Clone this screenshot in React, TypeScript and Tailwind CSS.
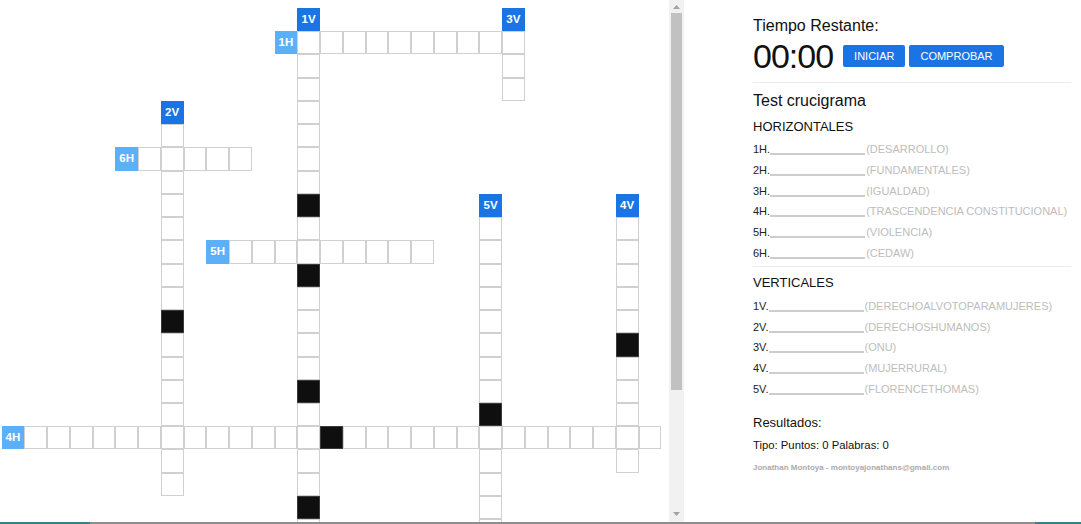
import React from 'react';

type Dir = 'H' | 'V';
type Kind = 'labelH' | 'labelV' | 'white' | 'black';

const palabras: { label: string; r: number; c: number; dir: Dir; word: string }[] = [
  { label: '1V', r: 0, c: 13, dir: 'V', word: 'DERECHO AL VOTO PARA MUJERES' },
  { label: '3V', r: 0, c: 22, dir: 'V', word: 'ONU' },
  { label: '1H', r: 1, c: 12, dir: 'H', word: 'DESARROLLO' },
  { label: '2V', r: 4, c: 7, dir: 'V', word: 'DERECHOS HUMANOS' },
  { label: '6H', r: 6, c: 5, dir: 'H', word: 'CEDAW' },
  { label: '5V', r: 8, c: 21, dir: 'V', word: 'FLORENCE THOMAS' },
  { label: '4V', r: 8, c: 27, dir: 'V', word: 'MUJER RURAL' },
  { label: '5H', r: 10, c: 9, dir: 'H', word: 'VIOLENCIA' },
  { label: '4H', r: 18, c: 0, dir: 'H', word: 'TRASCENDENCIA CONSTITUCIONAL' },
];

const horizontales = [
  ['1H.', '(DESARROLLO)'],
  ['2H.', '(FUNDAMENTALES)'],
  ['3H.', '(IGUALDAD)'],
  ['4H.', '(TRASCENDENCIA CONSTITUCIONAL)'],
  ['5H.', '(VIOLENCIA)'],
  ['6H.', '(CEDAW)'],
];

const verticales = [
  ['1V.', '(DERECHOALVOTOPARAMUJERES)'],
  ['2V.', '(DERECHOSHUMANOS)'],
  ['3V.', '(ONU)'],
  ['4V.', '(MUJERRURAL)'],
  ['5V.', '(FLORENCETHOMAS)'],
];

function armarCeldas() {
  const celdas = new Map<string, { r: number; c: number; kind: Kind; label?: string }>();
  palabras.forEach((p) => {
    celdas.set(`${p.r},${p.c}`, { r: p.r, c: p.c, kind: p.dir === 'H' ? 'labelH' : 'labelV', label: p.label });
  });
  palabras.forEach((p) => {
    p.word.split('').forEach((ch, i) => {
      const r = p.dir === 'V' ? p.r + 1 + i : p.r;
      const c = p.dir === 'H' ? p.c + 1 + i : p.c;
      const key = `${r},${c}`;
      const prev = celdas.get(key);
      if (prev && (prev.kind === 'labelH' || prev.kind === 'labelV')) return;
      celdas.set(key, { r, c, kind: ch === ' ' ? 'black' : 'white' });
    });
  });
  return Array.from(celdas.values());
}

function Celda({ r, c, kind, label }: { r: number; c: number; kind: Kind; label?: string }) {
  const pos = { gridRow: r + 1, gridColumn: c + 1 };
  if (kind === 'labelV' || kind === 'labelH') {
    return (
      <div
        style={pos}
        className={`${kind === 'labelV' ? 'bg-[#1b74e4]' : 'bg-[#5cb0f8]'} text-white text-[11.5px] font-bold flex items-center justify-center`}
      >
        {label}
      </div>
    );
  }
  if (kind === 'black') {
    return <div style={pos} className="bg-[#0f0f0f] border border-[#3a3a3a]" />;
  }
  return <div style={pos} className="bg-white border border-[#d0d0d0]" />;
}

function Flecha({ up }: { up?: boolean }) {
  return (
    <svg width="7" height="4" viewBox="0 0 7 4" className={up ? '' : 'rotate-180'}>
      <polygon points="0,4 3.5,0 7,4" fill="#a3a3a3" />
    </svg>
  );
}

function Pista({ num, resp }: { num: string; resp: string }) {
  return (
    <div className="text-[11px] leading-[20.8px] h-[20.8px] whitespace-nowrap">
      <span className="text-[#222]">{num}</span>
      <span className="inline-block w-[95px] border-b border-[#9c9c9c] translate-y-[1.5px]" />
      <span className="text-[#bdbdbd] ml-[1px]">{resp}</span>
    </div>
  );
}

export default function App() {
  const celdas = armarCeldas();

  return (
    <div className="w-[1081px] h-[524px] overflow-hidden bg-white font-['Liberation_Sans',Arial,sans-serif] text-[#111]">
      <div className="flex h-[522px]">
        {/* crucigrama */}
        <div className="w-[669px] h-full overflow-hidden">
          <div className="grid grid-cols-[repeat(29,22.75px)] grid-rows-[repeat(29,23.24px)] pl-[1.5px] pt-[8px]">
            {celdas.map((cel) => (
              <Celda key={`${cel.r}-${cel.c}`} {...cel} />
            ))}
          </div>
        </div>

        {/* barra de desplazamiento */}
        <div className="w-[15px] h-full bg-[#f1f1f1] flex flex-col items-center">
          <div className="h-[13px] flex items-center justify-center">
            <Flecha up />
          </div>
          <div className="w-[11px] h-[377px] bg-[#c1c1c1]" />
          <div className="flex-1" />
          <div className="h-[15px] flex items-center justify-center pb-[1px]">
            <Flecha />
          </div>
        </div>

        {/* panel derecho */}
        <div className="flex-1 pl-[69px] pr-[10px] pt-[17px]">
          <div className="text-[16px] leading-[18px]">Tiempo Restante:</div>
          <div className="flex items-center h-[34px] mt-[4px]">
            <span className="text-[34px] leading-[34px] tracking-[-1px]">00:00</span>
            <button className="ml-[10px] h-[22px] px-[11px] bg-[#1b74e4] text-white text-[11px] rounded-[2px]">
              INICIAR
            </button>
            <button className="ml-[4px] h-[22px] px-[11px] bg-[#1b74e4] text-white text-[11px] rounded-[2px]">
              COMPROBAR
            </button>
          </div>
          <div className="mt-[9px] h-px bg-[#ececec]" />
          <div className="mt-[9px] text-[16px] leading-[18px]">Test crucigrama</div>
          <div className="mt-[9px] text-[13px] leading-[15px]">HORIZONTALES</div>
          <div className="mt-[5px]">
            {horizontales.map(([n, r]) => (
              <Pista key={n} num={n} resp={r} />
            ))}
          </div>
          <div className="mt-[2px] h-px bg-[#ececec]" />
          <div className="mt-[8px] text-[13px] leading-[15px]">VERTICALES</div>
          <div className="mt-[6px]">
            {verticales.map(([n, r]) => (
              <Pista key={n} num={n} resp={r} />
            ))}
          </div>
          <div className="mt-[15px] text-[13px] leading-[15px]">Resultados:</div>
          <div className="mt-[8px] text-[11.3px] leading-[15px]">Tipo: Puntos: 0 Palabras: 0</div>
          <div className="mt-[10px] text-[8px] leading-[10px] font-bold text-[#ababab]">
            Jonathan Montoya - montoyajonathans@gmail.com
          </div>
        </div>
      </div>
      <div className="flex h-[2px] bg-[#8d8d8d]">
        <div className="w-[90px] bg-[#3d7f88]" />
        <div className="flex-1" />
        <div className="w-[46px] bg-[#3d7f88]" />
      </div>
    </div>
  );
}
